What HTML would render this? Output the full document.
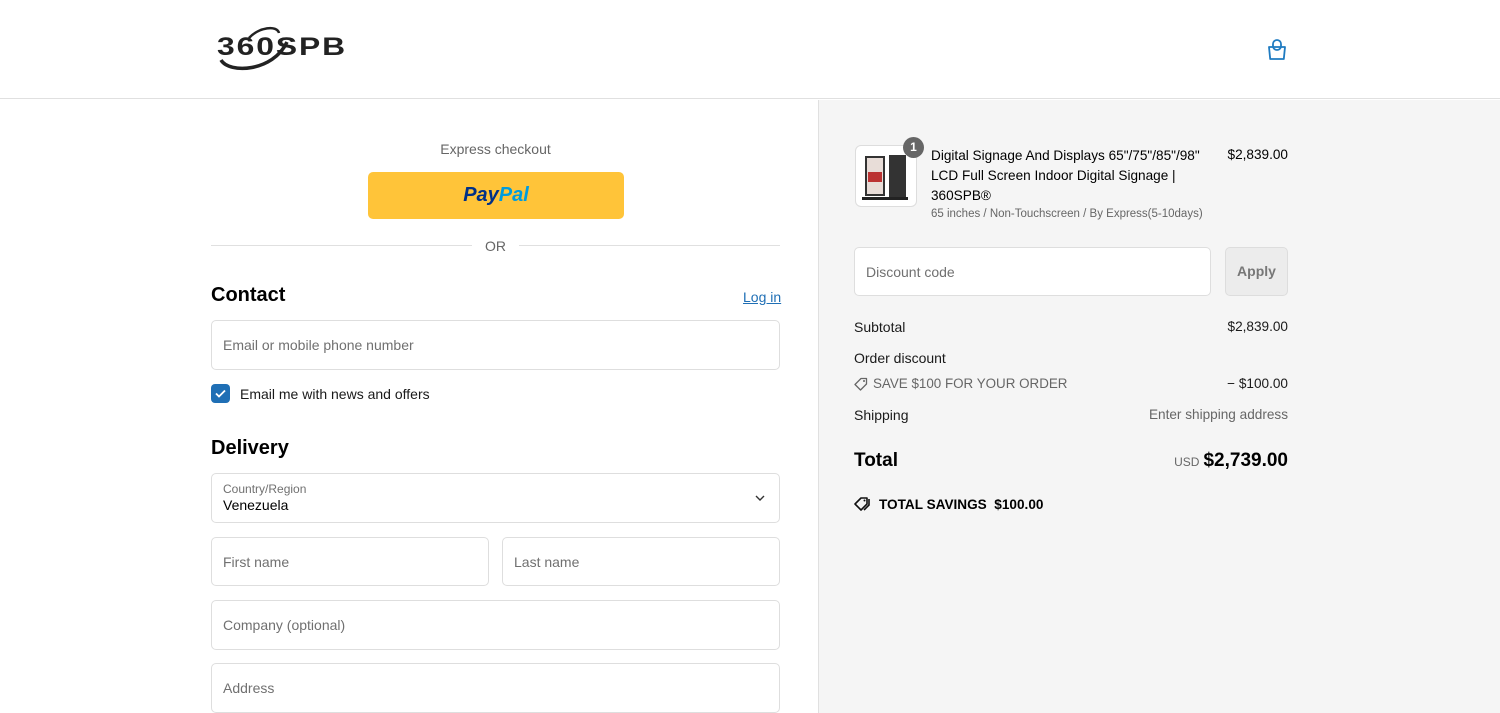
<!DOCTYPE html>
<html><head><meta charset="utf-8"><style>
*{box-sizing:border-box;margin:0;padding:0}
body{width:1500px;height:713px;overflow:hidden;font-family:"Liberation Sans",sans-serif;color:#000;background:#fff;position:relative;font-size:14px}
.a{position:absolute}
.inp{position:absolute;border:1px solid #dedede;border-radius:5px;background:#fff;color:#707070;font-size:14px;padding-left:11px;display:flex;align-items:center}
.r{color:#1a1a1a}
</style></head><body>
<div class="a" style="left:0;top:0;width:1500px;height:99px;border-bottom:1px solid #e0e0e0"></div>
<!-- logo -->
<svg class="a" style="left:215px;top:24px" width="140" height="50" viewBox="0 0 140 50">
<path d="M6 36 C14 50,58 48,72 18" stroke="#222" stroke-width="3.5" fill="none"/>
<path d="M34 14 C44 3,62 1,64 9" stroke="#222" stroke-width="2.5" fill="none"/>
<text x="2" y="31" font-family="Liberation Sans" font-weight="bold" font-size="25" fill="#222" letter-spacing="1.5" textLength="130" lengthAdjust="spacingAndGlyphs">360SPB</text>
</svg>
<svg class="a" style="left:1266px;top:38px" width="22" height="24" viewBox="0 0 22 24"><path d="M3 9h16l-1.2 12H4.2z" stroke="#1f7bc1" stroke-width="1.8" fill="none" stroke-linejoin="round"/><rect x="7" y="2" width="8" height="10" rx="4" stroke="#1f7bc1" stroke-width="1.8" fill="none"/></svg>
<!-- right panel -->
<div class="a" style="left:818px;top:100px;width:682px;height:613px;background:#f5f5f5;border-left:1px solid #e0e0e0"></div>
<div class="a" style="left:855px;top:145px;width:62px;height:62px;border:1px solid #ddd;border-radius:6px;background:#fff">
<div class="a" style="left:9px;top:10px;width:20px;height:40px;background:#e8ddd8;border:2px solid #333"></div>
<div class="a" style="left:12px;top:26px;width:14px;height:10px;background:#b33"></div>
<div class="a" style="left:33px;top:9px;width:17px;height:43px;background:#333"></div>
<div class="a" style="left:6px;top:51px;width:46px;height:3px;background:#222"></div>
</div>
<div class="a" style="left:903px;top:137px;width:21px;height:21px;border-radius:50%;background:#666;color:#fff;font-size:12px;font-weight:bold;text-align:center;line-height:21px">1</div>
<div class="a" style="left:931px;top:146px;width:290px;font-size:13.6px;line-height:20px">Digital Signage And Displays 65"/75"/85"/98" LCD Full Screen Indoor Digital Signage | 360SPB®</div>
<div class="a" style="left:931px;top:208px;font-size:11.5px;color:#666">65 inches / Non-Touchscreen / By Express(5-10days)</div>
<div class="a" style="left:1160px;top:147px;width:128px;text-align:right;font-size:13.6px">$2,839.00</div>
<div class="inp" style="left:854px;top:247px;width:357px;height:49px">Discount code</div>
<div class="a" style="left:1225px;top:247px;width:63px;height:49px;border:1px solid #ddd;border-radius:5px;background:#ececec;color:#777;font-weight:bold;text-align:center;line-height:47px">Apply</div>
<div class="a r" style="left:854px;top:319px">Subtotal</div>
<div class="a r" style="left:1100px;top:319px;width:188px;text-align:right;font-size:13.6px">$2,839.00</div>
<div class="a r" style="left:854px;top:350px">Order discount</div>
<svg class="a" style="left:854px;top:377px" width="14" height="14" viewBox="0 0 14 14"><path d="M7 1.5h5.5v5.5l-6 6-5.5-5.5z" stroke="#666" stroke-width="1.3" fill="none" stroke-linejoin="round"/><circle cx="10" cy="4" r="1" fill="#666"/></svg>
<div class="a" style="left:873px;top:376px;color:#666;font-size:13.4px">SAVE $100 FOR YOUR ORDER</div>
<div class="a r" style="left:1100px;top:376px;width:188px;text-align:right;font-size:13.6px">− $100.00</div>
<div class="a r" style="left:854px;top:407px">Shipping</div>
<div class="a" style="left:1100px;top:407px;width:188px;text-align:right;color:#666;font-size:13.6px">Enter shipping address</div>
<div class="a" style="left:854px;top:450px;font-size:19px;font-weight:bold">Total</div>
<div class="a" style="left:1100px;top:450px;width:188px;text-align:right;font-size:19px;font-weight:bold"><span style="font-size:12px;font-weight:normal;color:#666;margin-right:4px">USD</span>$2,739.00</div>
<svg class="a" style="left:854px;top:496px" width="18" height="16" viewBox="0 0 18 16"><path d="M7 2h6v6l-6 6-6-6z" stroke="#111" stroke-width="1.6" fill="none" stroke-linejoin="round"/><path d="M15 3v6l-5 5" stroke="#111" stroke-width="1.6" fill="none"/><circle cx="10.5" cy="4.5" r="1" fill="#111"/></svg>
<div class="a" style="left:879px;top:497px;font-weight:bold;font-size:13.6px">TOTAL SAVINGS&nbsp;&nbsp;$100.00</div>
<!-- left -->
<div class="a" style="left:211px;top:141px;width:569px;text-align:center;color:#666">Express checkout</div>
<div class="a" style="left:368px;top:172px;width:256px;height:47px;background:#ffc439;border-radius:5px;text-align:center;line-height:47px;font-size:20px;font-weight:bold;font-style:italic"><span style="color:#003087">Pay</span><span style="color:#009cde">Pal</span></div>
<div class="a" style="left:211px;top:245px;width:261px;border-top:1px solid #e0e0e0"></div>
<div class="a" style="left:519px;top:245px;width:261px;border-top:1px solid #e0e0e0"></div>
<div class="a" style="left:472px;top:238px;width:47px;text-align:center;color:#666">OR</div>
<div class="a" style="left:211px;top:284px;font-size:20px;font-weight:bold">Contact</div>
<div class="a" style="left:743px;top:289px;color:#1f6fb5;text-decoration:underline">Log in</div>
<div class="inp" style="left:211px;top:320px;width:569px;height:50px">Email or mobile phone number</div>
<div class="a" style="left:211px;top:384px;width:19px;height:19px;border-radius:4px;background:#1f6fb5"><svg width="19" height="19" viewBox="0 0 19 19"><path d="M5 9.5l3 3 6-6" stroke="#fff" stroke-width="1.8" fill="none"/></svg></div>
<div class="a r" style="left:240px;top:386px">Email me with news and offers</div>
<div class="a" style="left:211px;top:437px;font-size:20px;font-weight:bold">Delivery</div>
<div class="inp" style="left:211px;top:473px;width:569px;height:50px;display:block;padding-top:8px">
<div style="font-size:12px;color:#707070">Country/Region</div><div style="color:#000;font-size:14px;margin-top:1px">Venezuela</div></div>
<svg class="a" style="left:754px;top:493px" width="12" height="10" viewBox="0 0 12 10"><path d="M2 3l4 4 4-4" stroke="#333" stroke-width="1.4" fill="none"/></svg>
<div class="inp" style="left:211px;top:537px;width:278px;height:49px">First name</div>
<div class="inp" style="left:502px;top:537px;width:278px;height:49px">Last name</div>
<div class="inp" style="left:211px;top:600px;width:569px;height:50px">Company (optional)</div>
<div class="inp" style="left:211px;top:663px;width:569px;height:50px">Address</div>
</body></html>
